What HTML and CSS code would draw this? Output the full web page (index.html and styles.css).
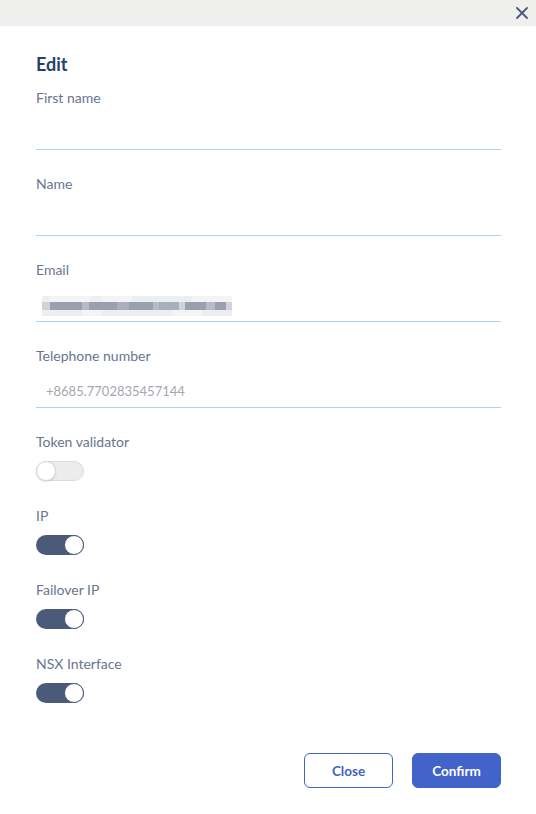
FILE: index.html
```html
<!DOCTYPE html>
<html lang="en">
<head>
<meta charset="utf-8">
<title>Edit</title>
<link rel="stylesheet" href="styles.css">
</head>
<body>
<div class="modal">
  <div class="modal-header">
    <button class="close-x" aria-label="Close">
      <svg width="12" height="12" viewBox="0 0 12 12"><path d="M1 1 L11 11 M11 1 L1 11" stroke="#4a5a78" stroke-width="1.8" stroke-linecap="round" fill="none"/></svg>
    </button>
  </div>
  <div class="modal-body">
    <h2 class="title">Edit</h2>
    <div class="field">
      <label class="label">First name</label>
      <div class="input"></div>
    </div>
    <div class="field">
      <label class="label">Name</label>
      <div class="input"></div>
    </div>
    <div class="field">
      <label class="label">Email</label>
      <div class="input">
        <div class="blur">
          <div class="blur-row light"><span style="width:8px"></span><span style="width:40px"></span><span style="width:12px"></span><span style="width:30px"></span><span style="width:60px"></span><span style="width:40px"></span></div>
          <div class="blur-row dark"><span class="g1" style="width:8px"></span><span class="g3" style="width:34px"></span><span class="g2" style="width:8px"></span><span class="g3" style="width:30px"></span><span class="g4" style="width:12px"></span><span class="g3" style="width:26px"></span><span class="g2" style="width:6px"></span><span class="g4" style="width:22px"></span><span class="g1" style="width:6px"></span><span class="g3" style="width:22px"></span><span class="g2" style="width:10px"></span><span class="g3" style="width:12px"></span><span class="g1" style="width:6px"></span></div>
          <div class="blur-row light"><span style="width:40px"></span><span style="width:20px"></span><span style="width:70px"></span><span style="width:30px"></span><span style="width:30px"></span></div>
        </div>
      </div>
    </div>
    <div class="field">
      <label class="label">Telephone number</label>
      <div class="input"><span class="placeholder">+8685.7702835457144</span></div>
    </div>
    <div class="toggle-group">
      <label class="label">Token validator</label>
      <div class="toggle off"><span class="knob"></span></div>
    </div>
    <div class="toggle-group">
      <label class="label">IP</label>
      <div class="toggle on"><span class="knob"></span></div>
    </div>
    <div class="toggle-group">
      <label class="label">Failover IP</label>
      <div class="toggle on"><span class="knob"></span></div>
    </div>
    <div class="toggle-group">
      <label class="label">NSX Interface</label>
      <div class="toggle on"><span class="knob"></span></div>
    </div>
    <div class="actions">
      <button class="btn btn-outline">Close</button>
      <button class="btn btn-primary">Confirm</button>
    </div>
  </div>
</div>
</body>
</html>
```

FILE: styles.css
```css
* { box-sizing: border-box; }
html, body {
  margin: 0;
  padding: 0;
  background: #ffffff;
  font-family: Lato, "Open Sans", sans-serif;
}
.modal {
  width: 536px;
  height: 814px;
  background: #fff;
}
.modal-header {
  height: 26px;
  background: #eff0ee;
  display: flex;
  justify-content: flex-end;
  align-items: center;
  padding-right: 8px;
}
.close-x {
  border: 0;
  background: transparent;
  padding: 0;
  width: 12px;
  height: 12px;
  display: flex;
}
.modal-body {
  padding: 0 35px 0 36px;
}
.title {
  margin: 0;
  padding-top: 26px;
  height: 62px;
  font-size: 18px;
  line-height: 24px;
  font-weight: 700;
  color: #273f6d;
}
.label {
  display: block;
  font-size: 14px;
  line-height: 20px;
  color: #68768e;
}
.field {
  height: 86px;
}
.input {
  height: 42px;
  border-bottom: 1px solid #a8d6f2;
  padding: 14px 0 0 10px;
}
.placeholder {
  font-size: 13px;
  line-height: 20px;
  color: #a3a8b0;
}
.blur {
  margin-left: -4px;
  padding-top: 2px;
  width: 190px;
}
.blur-row {
  display: flex;
  height: 6px;
}
.blur-row.dark { height: 8px; background: #b3b8c3; }
.blur-row.light span:nth-child(odd) { background: #eceef0; }
.blur-row.light span:nth-child(even) { background: #f4f4f5; }
.blur-row span { display: block; height: 100%; }
.g1 { background: #d0d3da; }
.g2 { background: #b6bbc5; }
.g3 { background: #9aa1ae; }
.g4 { background: #a9afbb; }
.toggle-group {
  height: 74px;
}
.toggle {
  margin-top: 9px;
  width: 48px;
  height: 20px;
  border-radius: 10px;
  position: relative;
}
.toggle.off {
  background: #ececec;
  border: 1px solid #dcdcdc;
}
.toggle.on {
  background: #4b5a78;
}
.knob {
  position: absolute;
  top: 0;
  width: 20px;
  height: 20px;
  border-radius: 50%;
  background: #fff;
}
.toggle.off .knob {
  top: -1px;
  left: -1px;
  border: 1px solid #d6d6d6;
  box-shadow: 0 1px 2px rgba(0,0,0,0.12);
}
.toggle.on .knob {
  right: 0;
  border: 1px solid #4b5a78;
}
.actions {
  display: flex;
  justify-content: flex-end;
  gap: 19px;
  margin-top: 25px;
}
.btn {
  width: 89px;
  height: 35px;
  border-radius: 6px;
  font-family: Lato, "Open Sans", sans-serif;
  font-size: 13.5px;
  font-weight: 700;
  cursor: pointer;
}
.btn-outline {
  background: #fff;
  border: 1px solid #4263c9;
  color: #3f5fc4;
}
.btn-primary {
  background: #4263c9;
  border: 1px solid #4263c9;
  color: #fff;
}
```
